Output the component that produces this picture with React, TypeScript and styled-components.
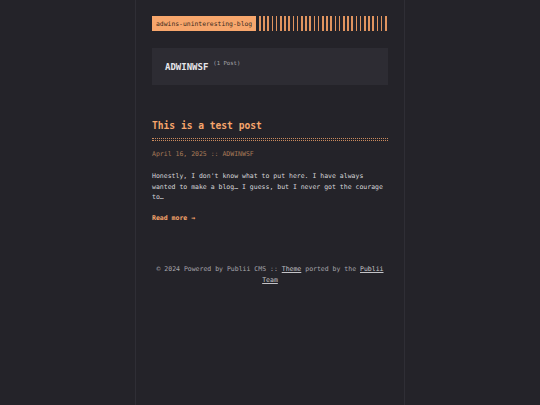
import React from "react";
import styled, { createGlobalStyle } from "styled-components";

const orange = "#f7a66c";
const bg = "#242329";

const GlobalStyle = createGlobalStyle`
  html, body {
    margin: 0;
    padding: 0;
    background: ${bg};
    font-family: "DejaVu Sans Mono", "Liberation Mono", monospace;
  }
`;

const Page = styled.div`
  min-height: 405px;
  display: flex;
  justify-content: center;
`;

const Column = styled.main`
  width: 236px;
  padding: 16px 16px 0;
  border-left: 1px solid #2f2e35;
  border-right: 1px solid #2f2e35;
  min-height: 389px;
`;

const Header = styled.header`
  display: flex;
  align-items: stretch;
  height: 15px;
  gap: 3px;
`;

const Logo = styled.a`
  display: flex;
  align-items: center;
  padding: 0 4px;
  background: ${orange};
  color: #3a2a20;
  font-size: 6.4px;
  text-decoration: none;
`;

const Stripes = styled.div`
  flex: 1;
  background: repeating-linear-gradient(
    90deg,
    #e0945f 0px,
    #e0945f 1.6px,
    transparent 1.6px,
    transparent 4.2px
  );
`;

const AuthorCard = styled.section`
  margin-top: 17px;
  height: 37px;
  background: #2d2c33;
  display: flex;
  align-items: center;
  padding: 0 13px;
  gap: 5px;
`;

const AuthorName = styled.h2`
  margin: 0;
  color: #e6e6ea;
  font-size: 9px;
  font-weight: bold;
`;

const PostCount = styled.sup`
  align-self: flex-start;
  margin-top: 12px;
  color: #a6a6ac;
  font-size: 5.6px;
`;

const Article = styled.article`
  margin-top: 34px;
`;

const Title = styled.h1`
  margin: 0;
  color: ${orange};
  font-size: 9.6px;
  font-weight: bold;
  line-height: 14px;
`;

const Separator = styled.div`
  margin-top: 5px;
  height: 1px;
  border-top: 1px dotted ${orange};
  border-bottom: 1px dotted ${orange};
  opacity: 0.8;
`;

const Meta = styled.div`
  margin-top: 8px;
  color: #a77a58;
  font-size: 6.5px;
  line-height: 10px;
`;

const Excerpt = styled.p`
  margin: 12px 0 0;
  color: #d6d6da;
  font-size: 6.5px;
  line-height: 10.5px;
`;

const ReadMore = styled.a`
  display: inline-block;
  margin-top: 11px;
  color: ${orange};
  font-size: 6.5px;
  font-weight: bold;
  text-decoration: none;
`;

const Footer = styled.footer`
  margin-top: 40px;
  text-align: center;
  color: #a4a4aa;
  font-size: 6.5px;
  line-height: 11px;
  padding: 0 3px;
`;

const FooterLink = styled.a`
  color: #c4c4c8;
  text-decoration: underline;
`;

export default function App() {
  return (
    <>
      <GlobalStyle />
      <Page>
        <Column>
          <Header>
            <Logo href="#">adwins-uninteresting-blog</Logo>
            <Stripes />
          </Header>
          <AuthorCard>
            <AuthorName>ADWINWSF</AuthorName>
            <PostCount>(1 Post)</PostCount>
          </AuthorCard>
          <Article>
            <Title>This is a test post</Title>
            <Separator />
            <Meta>April 16, 2025 :: ADWINWSF</Meta>
            <Excerpt>
              Honestly, I don't know what to put here. I have always wanted to
              make a blog… I guess, but I never got the courage to…
            </Excerpt>
            <ReadMore href="#">Read more →</ReadMore>
          </Article>
          <Footer>
            © 2024 Powered by Publii CMS :: <FooterLink href="#">Theme</FooterLink>{" "}
            ported by the <FooterLink href="#">Publii</FooterLink>{" "}
            <FooterLink href="#">Team</FooterLink>
          </Footer>
        </Column>
      </Page>
    </>
  );
}
